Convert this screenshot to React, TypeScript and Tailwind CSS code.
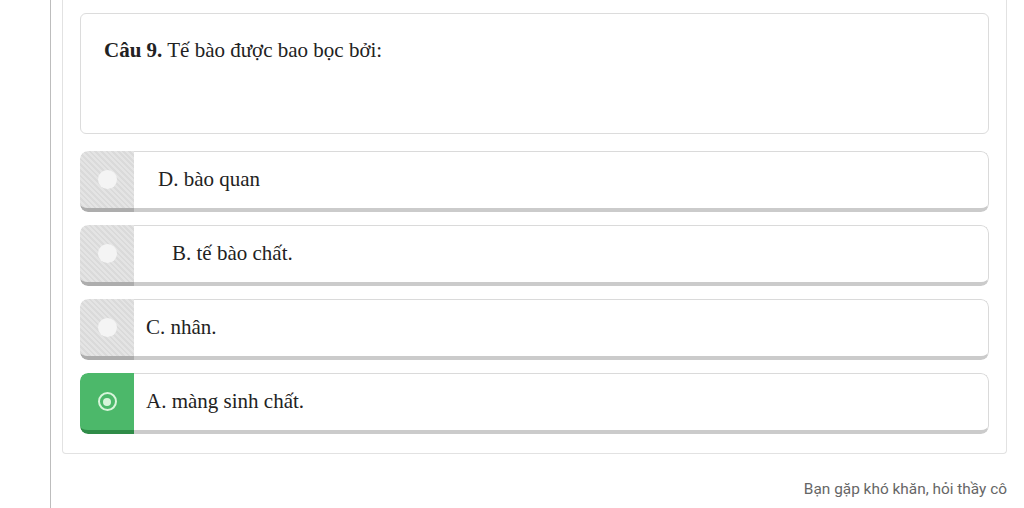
import React from 'react';

type Option = {
  label: string;
  text: string;
  indent: string;
  selected?: boolean;
};

const options: Option[] = [
  { label: 'D.', text: 'bào quan', indent: 'pl-[24px]' },
  { label: 'B.', text: 'tế bào chất.', indent: 'pl-[38px]' },
  { label: 'C.', text: 'nhân.', indent: 'pl-[12px]' },
  { label: 'A.', text: 'màng sinh chất.', indent: 'pl-[12px]', selected: true },
];

const OptionRow = ({ item }: { item: Option }) => {
  return (
    <div className="flex h-[61px] rounded-[8px] overflow-hidden">
      <div
        className={
          item.selected
            ? 'w-[54px] shrink-0 flex items-center justify-center bg-[#4cb86a] border-b-4 border-[#2f8c48] rounded-l-[8px]'
            : 'w-[54px] shrink-0 flex items-center justify-center bg-[repeating-linear-gradient(45deg,#e4e4e4_0px,#e4e4e4_2px,#dadada_2px,#dadada_4px)] border-b-4 border-[#adadad] rounded-l-[8px]'
        }
      >
        {item.selected ? (
          <div className="w-[19px] h-[19px] rounded-full border-2 border-[#d8f5db] flex items-center justify-center">
            <div className="w-[8px] h-[8px] rounded-full bg-[#d8f5db]" />
          </div>
        ) : (
          <div className="w-[19px] h-[19px] rounded-full bg-[#f4f4f4]" />
        )}
      </div>
      <div
        className={`flex-1 flex items-center bg-white border border-l-0 border-b-4 border-[#dadada] border-b-[#cbcbcb] rounded-r-[8px] ${item.indent}`}
      >
        <span className="text-[21px] text-[#222] font-['Liberation_Serif',serif]">
          {item.label} {item.text}
        </span>
      </div>
    </div>
  );
};

export default function App() {
  return (
    <div className="w-[1024px] h-[508px] overflow-hidden bg-white flex">
      <div className="w-[50px] shrink-0" />
      <div className="flex-1 flex flex-col border-l border-[#bdbdbd] pl-[11px] pr-[17px]">
        <div className="border border-t-0 border-[#e2e2e2] rounded-b-[4px] px-[17px] pt-[13px] pb-[19px] flex flex-col">
          <div className="h-[121px] border border-[#dcdcdc] rounded-[6px] pl-[23px] pt-[24px]">
            <p className="text-[21px] leading-[24px] text-[#222] font-['Liberation_Serif',serif]">
              <b>Câu 9.</b> Tế bào được bao bọc bởi:
            </p>
          </div>
          <div className="flex flex-col gap-[13px] mt-[17px]">
            {options.map((item) => (
              <OptionRow key={item.label} item={item} />
            ))}
          </div>
        </div>
        <div className="flex justify-end pt-[24px]">
          <span className="text-[15.4px] text-[#666] font-['Roboto',sans-serif]">
            Bạn gặp khó khăn, hỏi thầy cô
          </span>
        </div>
      </div>
    </div>
  );
}
